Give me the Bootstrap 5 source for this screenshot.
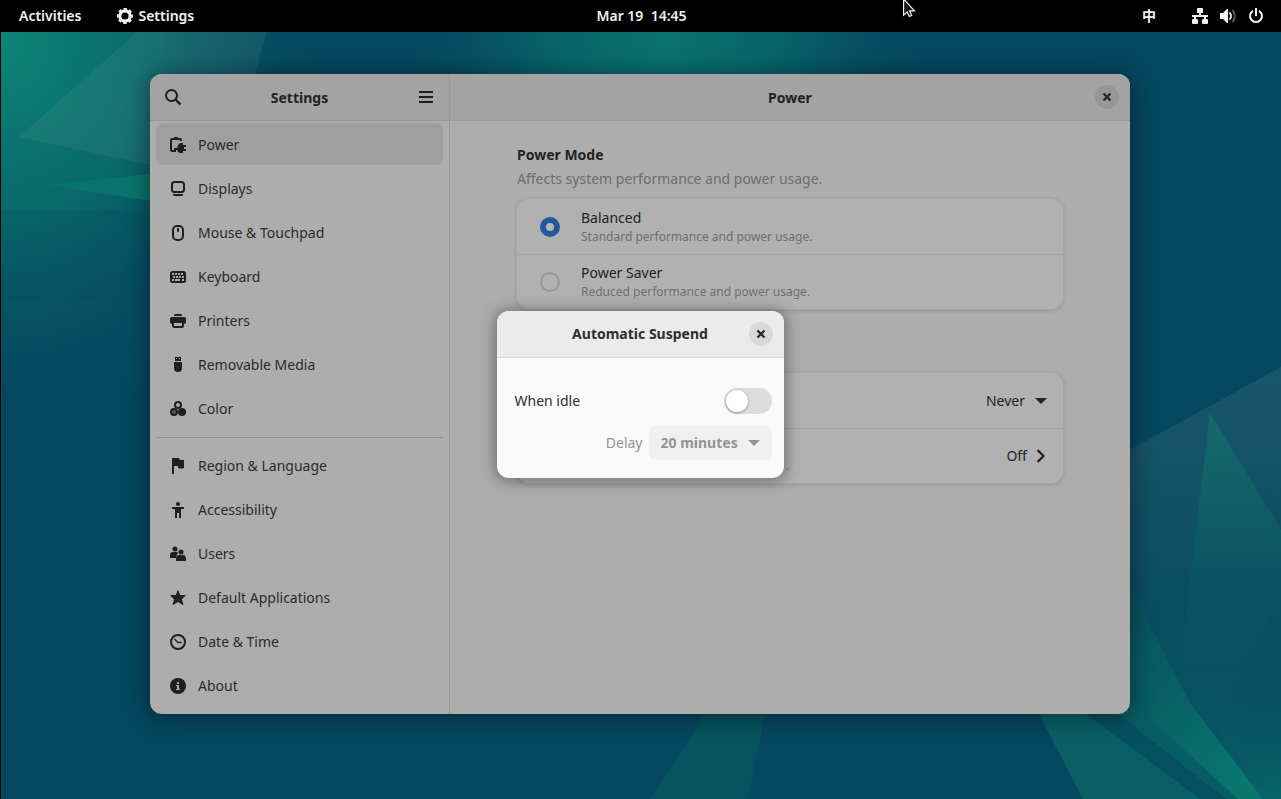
<!DOCTYPE html>
<html lang="en">
<head>
<meta charset="utf-8">
<meta name="viewport" content="width=device-width, initial-scale=1">
<title>Settings</title>
<link href="https://cdn.jsdelivr.net/npm/bootstrap@5.3.0/dist/css/bootstrap.min.css" rel="stylesheet">
<style>
  body { font-family: "Noto Sans", "Noto Sans CJK SC", sans-serif; font-size: 14px; line-height: 20px; color: #222; background: #05475e; }
  button, select { font: inherit; color: inherit; }
  .btn { font-size: 14px; line-height: 20px; }
  .topbar { height: 32px; background: #000; color: #f2f2f2; font-weight: 600; }
  .topbar .btn { color: inherit; font-weight: 600; }
  .topbar .menus { padding-left: 19px; gap: 35px; }
  .topbar .tray { padding-right: 17px; gap: 36px; }
  .topbar .system { gap: 10px; }
  .clock { white-space: pre; }
  .pointer { left: 903px; top: 0; z-index: 20; }
  .desktop { box-shadow: inset 1px 0 #000; padding: 42px 1px 0 0; }
  .wallpaper { inset: 0 0 0 1px; }
  .win { min-height: 640px; background: #adadad; border-radius: 12px; overflow: hidden; }
  .win-shadow { max-width: 980px; border-radius: 12px; box-shadow: 0 2px 22px 2px rgba(0, 0, 0, .4); }
  .side { width: 300px; border-right: 1px solid #989898; }
  .bar { height: 47px; padding: 0 11px 0 35px; background: #a3a3a3; border-bottom: 1px solid #979797; font-weight: 700; }
  .bar-title { padding-top: 1px; }
  .side .bar { padding: 0 6px; }
  .tool { width: 34px; height: 34px; line-height: 1; }
  .round-close { width: 24px; height: 24px; border-radius: 50%; background: #969696; line-height: 1; }
  .side-list { padding: 2px 6px 8px; gap: 2px; }
  .side-list a { height: 42px; padding: 0 14px; gap: 12px; border-radius: 6px; color: #2b2b2b; text-decoration: none; padding-top: 1px; }
  .side-list a.active { background: #9f9f9f; }
  .side-list hr { margin: 6px 0 4px; border-color: #8f8f8f; opacity: 1; }
  .page { max-width: 546px; padding-top: 24px; }
  .page h2 { font-size: 14px; line-height: 20px; font-weight: 700; margin: 0 0 4px; }
  .dim { color: #6e6e6e; margin-bottom: 10px; }
  .sub { font-size: 12px; line-height: 18px; color: #6e6e6e; }
  .panel { background: #b1b1b1; border-radius: 12px; box-shadow: 0 0 0 1px #a6a6a6, 0 1px 4px 1px rgba(0, 0, 0, .14); }
  .panel + .panel { margin-top: 64px; }
  .panel > * { height: 55px; }
  .panel > * + * { border-top: 1px solid #a1a1a1; }
  .choice { padding: 0 22px 0 23px; gap: 21px; }
  .choice input { appearance: none; width: 20px; height: 20px; margin: 0; border: 2px solid #979797; border-radius: 50%; }
  .choice input:checked { border: 6px solid #23589f; background: #b6b6b6; }
  .option { padding: 0 16px 0 12px; }
  .option .sub { width: 260px; padding-top: 20px; }
  .plain-select { appearance: none; border: 0; background: transparent; width: 62px; padding: 0 22px 0 0; text-align-last: right; }
  .caret-box { position: relative; }
  .caret-box svg { position: absolute; top: 50%; transform: translateY(-50%); pointer-events: none; }
  .shade { inset: 0; }
  .dialog-box { width: 287px; background: #fafafa; border-radius: 12px; box-shadow: 0 1px 14px 3px rgba(0, 0, 0, .34); overflow: hidden; }
  .dialog-box .bar { background: #ebebeb; border-color: #d9d9d9; color: #2e2e2e; }
  .dialog-box .round-close { background: #d8d8d8; }
  .dialog-body { padding: 30px 12px 18px 18px; color: #2e2e2e; gap: 12px; }
  .toggle { appearance: none; width: 48px; height: 26px; margin: 0; border-radius: 13px; background: #dcdcdc; padding: 2px; display: flex; }
  .toggle::before { content: ""; width: 22px; height: 22px; border-radius: 50%; background: #fff; box-shadow: 0 1px 3px rgba(0, 0, 0, .35); }
  .toggle:checked { background: #3584e4; justify-content: flex-end; }
  .delay { color: #949494; gap: 6px; }
  .delay select { appearance: none; width: 123px; height: 34px; border: 0; border-radius: 6px; padding: 0 12px; background: #f0f0f0; color: #949494; font-weight: 700; opacity: 1; }
</style>
</head>
<body class="vh-100 d-flex flex-column overflow-hidden">

<svg width="0" height="0" class="position-absolute" aria-hidden="true">
  <symbol id="i-close" viewBox="0 0 16 16"><path d="M4.500 4.500l7 7M11.500 4.500l-7 7" fill="none" stroke="currentColor" stroke-width="2.200"/></symbol>
  <symbol id="i-caret" viewBox="0 0 16 16"><path d="M2 5h12l-6 6z" fill="currentColor"/></symbol>
</svg>

<header class="topbar position-relative d-flex align-items-center flex-shrink-0">
  <div class="col d-flex align-items-center menus">
    <button type="button" class="btn p-0 border-0">Activities</button>
    <button type="button" class="btn p-0 border-0 d-flex align-items-center gap-1">
      <svg width="18" height="18" viewBox="0 0 18 18"><circle cx="9" cy="9" r="5.200" fill="none" stroke="#f2f2f2" stroke-width="3.200"/><circle cx="9" cy="9" r="7.200" fill="none" stroke="#f2f2f2" stroke-width="1.800" stroke-dasharray="3.400 2.255" stroke-dashoffset="1.700"/></svg>
      Settings
    </button>
  </div>
  <button type="button" class="btn p-0 border-0 clock">Mar 19  14:45</button>
  <div class="col d-flex align-items-center justify-content-end tray">
    <button type="button" class="btn p-0 border-0">中</button>
    <button type="button" class="btn p-0 border-0 d-flex align-items-center system" aria-label="System menu">
      <svg width="16" height="16" viewBox="0 0 16 16" fill="#f2f2f2"><rect x="5" y="0" width="6" height="5" rx="1"/><path d="M7 4h2v3h7v2h-2v2h-2V9H4v2H2V9H0V7h7z"/><rect x="0" y="11" width="6" height="5" rx="1"/><rect x="10" y="11" width="6" height="5" rx="1"/></svg>
      <svg width="20" height="16" viewBox="0 0 20 16"><path d="M2 5h3l4-4h1v14H9l-4-4H2z" fill="#f2f2f2"/><path d="M11.500 4.500a5 5 0 0 1 0 7" fill="none" stroke="#f2f2f2" stroke-width="2"/><path d="M14.500 2a9 9 0 0 1 0 12" fill="none" stroke="#555" stroke-width="2"/></svg>
      <svg width="16" height="16" viewBox="0 0 16 16" fill="none" stroke="#f2f2f2" stroke-width="2"><path d="M5 2.800a6 6 0 1 0 6 0"/><path d="M8 0v8"/></svg>
    </button>
  </div>
  <svg class="pointer position-absolute" width="13" height="18" viewBox="0 0 13 18"><path d="M.6-1v16.200l3.500-3.300 2.300 4.600 2.300-1-2.200-4.700h4.900z" fill="#111" stroke="#f5f5f5" stroke-width="1.200"/></svg>
</header>

<main class="desktop position-relative flex-grow-1">
  <svg class="wallpaper position-absolute h-100" style="width:calc(100% - 1px)" viewBox="1 32 1280 767" preserveAspectRatio="none" aria-hidden="true">
    <defs>
      <radialGradient id="g1" gradientUnits="userSpaceOnUse" cx="0" cy="40" r="350" gradientTransform="translate(0 -6) scale(1 1.150)"><stop offset="0" stop-color="#0c8576"/><stop offset=".45" stop-color="#0a6c6c" stop-opacity=".9"/><stop offset="1" stop-color="#05475e" stop-opacity="0"/></radialGradient>
      <radialGradient id="g2" gradientUnits="userSpaceOnUse" cx="665" cy="42" r="290"><stop offset="0" stop-color="#0a736e"/><stop offset=".4" stop-color="#08656a" stop-opacity=".9"/><stop offset="1" stop-color="#05475e" stop-opacity="0"/></radialGradient>
      <linearGradient id="g3" x1="0" y1="0" x2="0" y2="1"><stop offset="0" stop-color="#1b566b"/><stop offset=".5" stop-color="#0b4d61"/><stop offset="1" stop-color="#064f5e"/></linearGradient>
      <linearGradient id="g4" x1="0" y1="0" x2="0" y2="1"><stop offset="0" stop-color="#176a6d"/><stop offset=".5" stop-color="#0b5463"/><stop offset="1" stop-color="#085160" stop-opacity="0"/></linearGradient>
      <linearGradient id="g5" x1="0" y1="0" x2=".7" y2="1"><stop offset="0" stop-color="#08505f"/><stop offset=".5" stop-color="#086065"/><stop offset="1" stop-color="#08786e"/></linearGradient>
      <linearGradient id="g6" x1="0" y1="0" x2="0" y2="1"><stop offset="0" stop-color="#064e5e" stop-opacity="0"/><stop offset="1" stop-color="#07636a"/></linearGradient>
    </defs>
    <rect y="32" width="1281" height="767" fill="#05475e"/>
    <rect y="32" width="700" height="450" fill="url(#g1)"/>
    <rect x="370" y="32" width="620" height="300" fill="url(#g2)"/>
    <path d="M19 137L137 32h130l-14 48-103 85z" fill="#8fb0b0" opacity=".11"/>
    <path d="M0 210h150v90H0z" fill="#04455c" opacity=".15"/>
    <path d="M48 185l110-12v29z" fill="#09746d"/>
    <path d="M1100 466l181-99v432h-181z" fill="url(#g3)"/>
    <path d="M1100 714h94l87 85h-181z" fill="#05475e"/>
    <path d="M1210 413l71 117v200l-103-50z" fill="url(#g4)"/>
    <path d="M1150 620h131v179h-60z" fill="url(#g6)"/>
    <path d="M1281 600l-52 95 20 104h32z" fill="#054a5d" opacity=".25"/>
    <path d="M1039 714l44 85h197l-90-96-60-3z" fill="#05505f"/>
    <path d="M1039 714l44 85h117l-114-85z" fill="#085f65"/>
    <path d="M1118 714l108 85h20l-116-99z" fill="#075d65"/>
    <path d="M1190 703l73 96h18v-60l-60-60z" fill="url(#g6)"/>
    <path d="M1129 585l61 118 73 96h-25l-109-100z" fill="url(#g5)"/>
    <path d="M705 714h60l-17 85h-98z" fill="#07525f"/>
  </svg>

  <div class="win-shadow position-relative mx-auto">
    <div class="win d-flex">
      <aside class="side flex-shrink-0">
        <div class="bar d-flex align-items-center">
          <button type="button" class="btn p-0 border-0 tool" aria-label="Search"><svg width="18" height="18" viewBox="0 0 18 18" fill="none" stroke="#1f1f1f"><circle cx="7.500" cy="7.500" r="5.500" stroke-width="2"/><path d="M11.500 11.500l5 5" stroke-width="2.400"/></svg></button>
          <div class="col text-center bar-title">Settings</div>
          <button type="button" class="btn p-0 border-0 tool" aria-label="Main menu"><svg width="16" height="16" viewBox="0 0 16 16" fill="#1f1f1f"><path d="M1 2h14v2H1zM1 7h14v2H1zM1 12h14v2H1z"/></svg></button>
        </div>
        <nav class="side-list d-flex flex-column">
          <a href="#" class="active d-flex align-items-center"><svg width="16" height="16" viewBox="0 0 16 16" fill="#1f1f1f"><path d="M4 0h4v1h2a2 2 0 0 1 2 2v1h-2V3H2v10h4v2H2a2 2 0 0 1-2-2V3a2 2 0 0 1 2-2h2z"/><path d="M10 6h3v2h3v2h-2v2h2v2h-3v2h-3q-2 0-3-3H4v-2h3q1-4 3-5z"/></svg>Power</a>
          <a href="#" class="d-flex align-items-center"><svg width="16" height="16" viewBox="0 0 16 16" fill="#1f1f1f"><rect x="2" y="1" width="12" height="10" rx="2.500" fill="none" stroke="#1f1f1f" stroke-width="2"/><path d="M3 13h10v.5q0 1.500-2 1.500H5q-2 0-2-1.500z"/></svg>Displays</a>
          <a href="#" class="d-flex align-items-center"><svg width="16" height="16" viewBox="0 0 16 16"><rect x="3" y="1" width="10" height="14" rx="4" fill="none" stroke="#1f1f1f" stroke-width="2"/><rect x="7" y="3" width="2" height="4" rx="1" fill="#1f1f1f"/></svg>Mouse &amp; Touchpad</a>
          <a href="#" class="d-flex align-items-center"><svg width="16" height="16" viewBox="0 0 16 16"><rect y="2" width="16" height="12" rx="2.500" fill="#1f1f1f"/><path d="M2 5h12M3 8h12M2 11h2M12 11h2" stroke="#adadad" stroke-width="2" stroke-dasharray="2 1"/><path d="M5 11h5" stroke="#adadad" stroke-width="2"/></svg>Keyboard</a>
          <a href="#" class="d-flex align-items-center"><svg width="16" height="16" viewBox="0 0 16 16"><path d="M5 1h6q1 0 1 2H4q0-2 1-2zM2 4h12q2 0 2 2v3q0 2-2 2v2q0 2-2 2H4q-2 0-2-2v-2q-2 0-2-2V6q0-2 2-2z" fill="#1f1f1f"/><path d="M4 10h8v3H4z" fill="#adadad"/></svg>Printers</a>
          <a href="#" class="d-flex align-items-center"><svg width="16" height="16" viewBox="0 0 16 16" fill="#1f1f1f"><path d="M5 0h6v4H5z"/><path d="M4 5h8v6q0 4-4 4t-4-4z"/><path d="M6 1h1v1H6zM9 1h1v1H9z" fill="#adadad"/></svg>Removable Media</a>
          <a href="#" class="d-flex align-items-center"><svg width="16" height="16" viewBox="0 0 16 16" fill="#1f1f1f"><circle cx="8" cy="4" r="3" fill="none" stroke="#1f1f1f" stroke-width="2"/><circle cx="4" cy="11" r="3" fill="#555" stroke="#1f1f1f" stroke-width="2"/><circle cx="12" cy="11" r="4"/></svg>Color</a>
          <hr>
          <a href="#" class="d-flex align-items-center"><svg width="16" height="16" viewBox="0 0 16 16" fill="#1f1f1f"><path d="M2 0h7l1 2h4v8q-3 1-6 0V8H4v8H2z"/></svg>Region &amp; Language</a>
          <a href="#" class="d-flex align-items-center"><svg width="16" height="16" viewBox="0 0 16 16" fill="#1f1f1f"><circle cx="8" cy="2" r="2"/><path d="M2 5h12v2h-3v9H9v-5H7v5H5V7H2z"/></svg>Accessibility</a>
          <a href="#" class="d-flex align-items-center"><svg width="16" height="16" viewBox="0 0 16 16" fill="#1f1f1f"><circle cx="5" cy="3" r="2.500"/><circle cx="11" cy="6" r="2.500"/><path d="M0 12V9q0-3 3-3h3q2 0 2 1-2 2-2 5z"/><path d="M6 15v-2q0-4 3-4h4q3 0 3 4v2z"/></svg>Users</a>
          <a href="#" class="d-flex align-items-center"><svg width="16" height="16" viewBox="0 0 16 16" fill="#1f1f1f" stroke="#1f1f1f" stroke-linejoin="round"><path d="M8 .8l1.900 4.700h5.300l-3.800 3.700 1.600 5.300L8 11.500l-5 3 1.600-5.300L.8 5.500h5.300z"/></svg>Default Applications</a>
          <a href="#" class="d-flex align-items-center"><svg width="16" height="16" viewBox="0 0 16 16" fill="none" stroke="#1f1f1f"><circle cx="8" cy="8" r="7" stroke-width="2"/><path d="M4.500 5l3 3q.5.500 1 .5h3" stroke-width="1.300"/></svg>Date &amp; Time</a>
          <a href="#" class="d-flex align-items-center"><svg width="16" height="16" viewBox="0 0 16 16"><circle cx="8" cy="8" r="8" fill="#1f1f1f"/><path d="M7 4h2v2H7zM6 7h3v4h1v1H6v-1h1V8H6z" fill="#adadad"/></svg>About</a>
        </nav>
      </aside>

      <section class="flex-grow-1">
        <div class="bar d-flex align-items-center">
          <div class="col text-center bar-title">Power</div>
          <button type="button" class="btn p-0 border-0 round-close" aria-label="Close window"><svg width="16" height="16"><use href="#i-close"/></svg></button>
        </div>
        <div class="page mx-auto">
          <h2>Power Mode</h2>
          <p class="dim">Affects system performance and power usage.</p>
          <div class="panel">
            <label class="choice d-flex align-items-center"><input type="radio" name="mode" checked><span><span class="d-block">Balanced</span><span class="d-block sub">Standard performance and power usage.</span></span></label>
            <label class="choice d-flex align-items-center"><input type="radio" name="mode"><span><span class="d-block">Power Saver</span><span class="d-block sub">Reduced performance and power usage.</span></span></label>
          </div>
          <div class="panel">
            <div class="option d-flex align-items-center justify-content-end">
              <span class="caret-box d-flex"><select id="blank" class="plain-select" aria-label="Screen Blank"><option>Never</option></select><svg class="end-0" width="12" height="16" viewBox="2 0 12 16"><use href="#i-caret" width="16" height="16"/></svg></span>
            </div>
            <button type="button" class="option d-flex align-items-center w-100 bg-transparent border-start-0 border-end-0 border-bottom-0" aria-label="Automatic Suspend">
              <span class="sub text-end">.</span>
              <span class="ms-auto me-2">Off</span><svg width="12" height="16" viewBox="0 0 12 16"><path d="M2.500 2l6 6-6 6" fill="none" stroke="#1f1f1f" stroke-width="2.200"/></svg>
            </button>
          </div>
        </div>
      </section>
    </div>

    <div class="shade position-absolute d-flex align-items-center justify-content-center">
      <div class="dialog-box" role="dialog" aria-label="Automatic Suspend">
        <div class="bar d-flex align-items-center">
          <div class="col text-center bar-title">Automatic Suspend</div>
          <button type="button" class="btn p-0 border-0 round-close" aria-label="Close dialog"><svg width="16" height="16"><use href="#i-close"/></svg></button>
        </div>
        <div class="dialog-body d-flex flex-column">
          <div class="d-flex align-items-center justify-content-between">
            <label for="idle">When idle</label>
            <input id="idle" type="checkbox" role="switch" class="toggle">
          </div>
          <div class="delay d-flex align-items-center justify-content-end">
            <label for="delay">Delay</label>
            <span class="caret-box d-flex"><select id="delay" disabled><option>20 minutes</option></select><svg class="end-0 me-2" width="20" height="16" viewBox="-2 0 20 16"><use href="#i-caret" width="16" height="16"/></svg></span>
          </div>
        </div>
      </div>
    </div>
  </div>
</main>
<script src="https://cdn.jsdelivr.net/npm/bootstrap@5.3.0/dist/js/bootstrap.bundle.min.js"></script>
</body>
</html>
